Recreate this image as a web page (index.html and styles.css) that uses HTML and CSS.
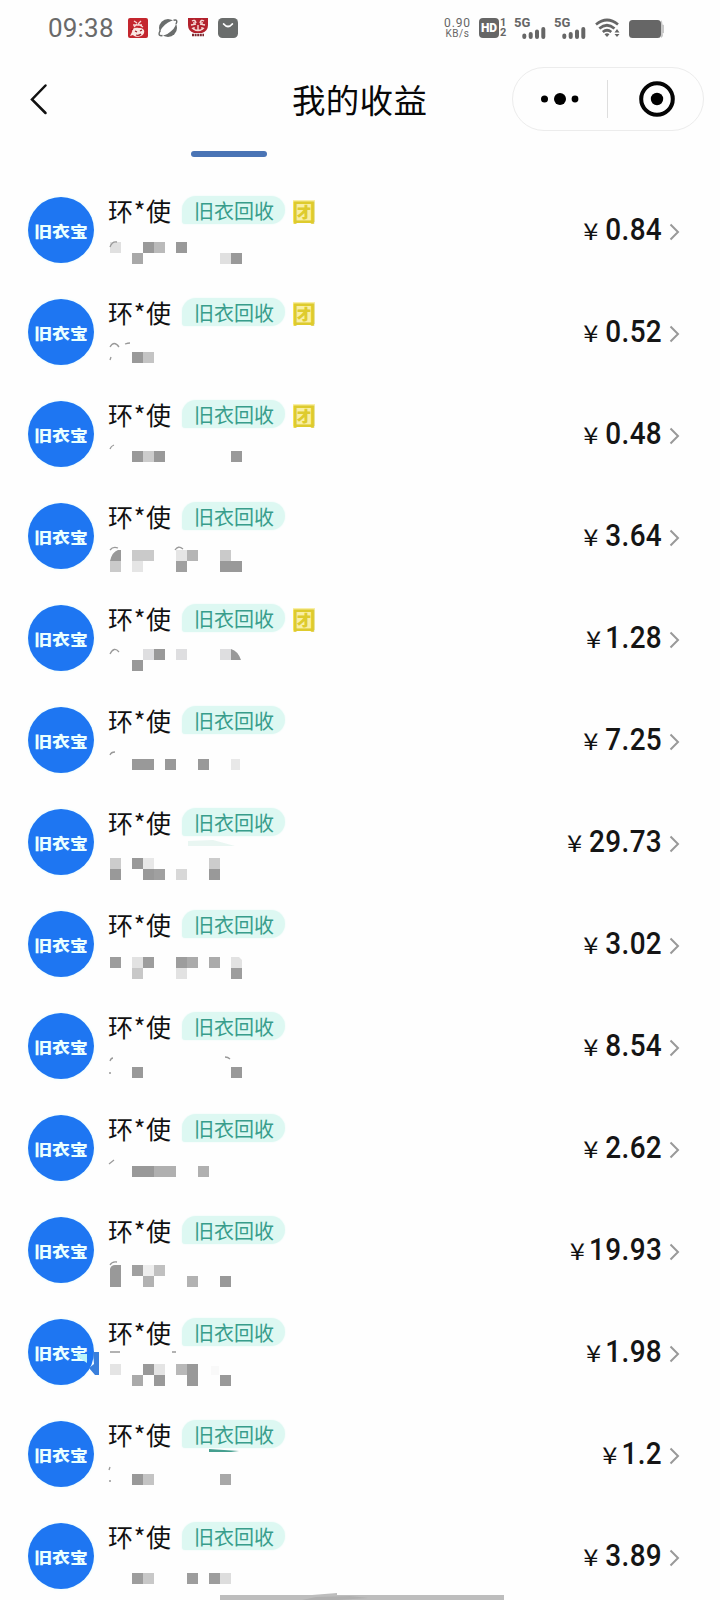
FILE: index.html
```html
<!DOCTYPE html>
<html lang="zh-CN">
<head>
<meta charset="utf-8">
<title>我的收益</title>
<link rel="stylesheet" href="styles.css">
</head>
<body>
<svg class="defs" width="0" height="0">
  <defs>
    <symbol id="chev" viewBox="0 0 12 20"><path d="M1.5 2.5 9 10 1.5 17.5" fill="none" stroke="#999" stroke-width="2"/></symbol>
    <symbol id="signal" viewBox="0 0 24 12"><path d="M2.3 10V8.500M8.700 10V7M15 10V4.500M21.300 10V2" fill="none" stroke="#666" stroke-width="4" stroke-linecap="round"/></symbol>
  </defs>
</svg>
<div class="screen">
  <header class="status">
    <div class="status-left">
      <span class="time">09:38</span>
      <svg class="app" viewBox="0 0 20 20"><rect width="20" height="20" rx="2" fill="#c4262e"/><path d="M6 3l3 2M13 3l-3 3M5 7h9M9 6l-3 3M10 6l5 3" stroke="#f7d9d5" stroke-width="1.300" fill="none"/><path d="M4 14c0-4 3-5 7-4 4 0 6 2 5 5-1 4-9 5-11 2l-3 1z" fill="#fae7e2"/><path d="M7 13l2 1M12 13l2-1M8 17q3 1 5-1M3 12l2-1" stroke="#a01a24" stroke-width="1.300" fill="none"/></svg>
      <svg class="app" viewBox="0 0 20 20"><circle cx="10" cy="10" r="9" fill="#6a6d6c"/><ellipse cx="10" cy="10" rx="10" ry="4.500" transform="rotate(-42 10 10)" fill="#fefefe"/><path d="M2.200 12.500Q-1 18.500 4.500 17.500M15.500 2.300Q20.500 1 18 6" fill="none" stroke="#6a6d6c" stroke-width="1.500"/></svg>
      <svg class="app" viewBox="0 0 20 20"><path d="M0 0h20v7q0 6-6 8H6Q0 13 0 7z" fill="#b3222d"/><path d="M4 3q3-2 4 2M16 3q-3-2-4 2M3 7l5-1M17 7l-5-1M4 10q6 5 12 0M6 9v3M10 7v6M14 9v3M6 4v3M14 4v3" stroke="#f5d8d5" stroke-width="1.400" fill="none"/><path d="M4 17h12" stroke="#7d2830" stroke-width="2.500" stroke-dasharray="2 .6"/></svg>
      <svg class="app" viewBox="0 0 20 20"><rect width="20" height="20" rx="4.500" fill="#6a6d6c"/><path d="M5.700 6q4.300 5 8.600 0" fill="none" stroke="#fff" stroke-width="1.900" stroke-linecap="round"/></svg>
    </div>
    <div class="status-right">
      <div class="speed"><span class="rate">0.90</span><span class="unit">KB/s</span></div>
      <div class="volte"><span class="hd">HD</span><span class="sims"><i>1</i><i>2</i></span></div>
      <div class="net"><b>5G</b><svg><use href="#signal"/></svg></div>
      <div class="net"><b>5G</b><svg><use href="#signal"/></svg></div>
      <svg class="wifi" viewBox="0 0 25 20"><path d="M1 6.500Q12 -2.500 23 6.500M4.300 10.500Q12 4 19.500 10.500M7.800 14Q12 10.500 16.300 14" fill="none" stroke="#666" stroke-width="2.700"/><path d="M9.500 16.300q2.500-2 5 0L12 19zM19.500 14.500 22 11l2.500 3.500zM19.500 16 22 19l2.500-3z" fill="#666"/></svg>
      <svg class="battery" viewBox="0 0 35 18"><rect width="32" height="18" rx="3.500" fill="#666"/><path d="M32 0v18q3-2 1.500-4.500L35 13V5l-1.500-.5Q33.500 1 32 0z" fill="#c8c8c8"/></svg>
    </div>
  </header>
  <nav class="navbar">
    <svg class="back" viewBox="0 0 18 32"><path d="M15.500 2.500 2 16.500 15.500 30" fill="none" stroke="#111" stroke-width="2.500" stroke-linecap="round"/></svg>
    <h1>我的收益</h1>
    <div class="capsule">
      <svg class="dots" viewBox="0 0 38 12"><circle cx="3.500" cy="6" r="3.500"/><circle cx="19" cy="6" r="6"/><circle cx="34" cy="6" r="3.400"/></svg>
      <span class="divider"></span>
      <svg class="target" viewBox="0 0 36 36"><circle cx="18" cy="18" r="15.800" fill="none" stroke="#050505" stroke-width="4"/><circle cx="18" cy="18" r="6.200"/></svg>
    </div>
  </nav>
  <div class="tabs"><span class="indicator"></span></div>
  <main class="list">
    <section class="row"><div class="avatar"><span>旧衣宝</span></div><div class="info"><div class="line"><span class="name">环<i>*</i>使</span><span class="tag">旧衣回收</span><span class="group">团</span></div>
      <svg class="mosaic"><path fill="#e0e0e0" d="M1 7h11v11H1zM111 18h11v11h-11z"/><path fill="#999" d="M34 7h11v11H34zM67 7h11v11H67zM122 18h11v11h-11z"/><path fill="#bababa" d="M45 7h11v11H45z"/><path fill="#a8a8a8" d="M23 18h11v11H23z"/><path class="arc" d="M1 12Q3 6 8 7"/></svg></div><div class="price"><span>¥</span><b>0.84</b></div><svg class="chev"><use href="#chev"/></svg></section>
    <section class="row"><div class="avatar"><span>旧衣宝</span></div><div class="info"><div class="line"><span class="name">环<i>*</i>使</span><span class="tag">旧衣回收</span><span class="group">团</span></div>
      <svg class="mosaic"><path fill="#999" d="M23 15h11v11H23z"/><path fill="#c4c4c4" d="M34 15h11v11H34z"/><path class="arc" d="M1 10Q5 3 10 10M16 7Q19 6 21 6M1 23l1-3"/></svg></div><div class="price"><span>¥</span><b>0.52</b></div><svg class="chev"><use href="#chev"/></svg></section>
    <section class="row"><div class="avatar"><span>旧衣宝</span></div><div class="info"><div class="line"><span class="name">环<i>*</i>使</span><span class="tag">旧衣回收</span><span class="group">团</span></div>
      <svg class="mosaic"><path fill="#999" d="M23 12h11v11H23zM45 12h11v11H45zM122 12h11v11h-11z"/><path fill="#ccc" d="M34 12h11v11H34z"/><path class="arc" d="M1 10Q2 7 5 6"/></svg></div><div class="price"><span>¥</span><b>0.48</b></div><svg class="chev"><use href="#chev"/></svg></section>
    <section class="row"><div class="avatar"><span>旧衣宝</span></div><div class="info"><div class="line"><span class="name">环<i>*</i>使</span><span class="tag">旧衣回收</span></div>
      <svg class="mosaic"><path fill="#999" d="M1 20Q3 11 9 9h3v11zM111 20h22v11h-22z"/><path fill="#cacaca" d="M1 20h11v11H1zM23 9h22v11H23zM111 9h11v11h-11z"/><path fill="#e5e5e5" d="M23 20h11v11H23zM67 9h11v11H67z"/><path fill="#b5b5b5" d="M78 9h11v11H78z"/><path fill="#a0a0a0" d="M67 20h11v11H67z"/><path class="arc" d="M1 9Q4 5 9 7M66 9Q69 4 74 8"/></svg></div><div class="price"><span>¥</span><b>3.64</b></div><svg class="chev"><use href="#chev"/></svg></section>
    <section class="row"><div class="avatar"><span>旧衣宝</span></div><div class="info"><div class="line"><span class="name">环<i>*</i>使</span><span class="tag">旧衣回收</span><span class="group">团</span></div>
      <svg class="mosaic"><path fill="#dedee0" d="M34 6h11v11H34zM67 6h11v11H67zM111 6h11v11h-11z"/><path fill="#999" d="M45 6h11v11H45zM23 17h11v11H23zM122 17V6q7 2 10 11z"/><path class="arc" d="M1 11Q5 3 10 9"/></svg></div><div class="price"><span>¥</span><b><i class="one">1</i>.28</b></div><svg class="chev"><use href="#chev"/></svg></section>
    <section class="row"><div class="avatar"><span>旧衣宝</span></div><div class="info"><div class="line"><span class="name">环<i>*</i>使</span><span class="tag">旧衣回收</span></div>
      <svg class="mosaic"><path fill="#999" d="M23 14h22v11H23zM56 14h11v11H56zM89 14h11v11H89z"/><path fill="#e8e8e8" d="M122 14h9v11h-9z"/><path class="arc" d="M1 10Q2 7 6 7"/></svg></div><div class="price"><span>¥</span><b>7.25</b></div><svg class="chev"><use href="#chev"/></svg></section>
    <section class="row"><div class="avatar"><span>旧衣宝</span></div><div class="info"><div class="line"><span class="name">环<i>*</i>使</span><span class="tag">旧衣回收</span></div>
      <svg class="mosaic"><path fill="#e9f6f2" d="M79-6l25-1 22 6H79z"/><path fill="#ccc" d="M1 11h11v11H1zM100 11h11v11h-11z"/><path fill="#999" d="M23 11h11v11H23zM1 22h11v11H1zM34 22h11v11H34zM100 22h11v11h-11z"/><path fill="#a0a0a0" d="M45 22h11v11H45z"/><path fill="#e8e8e8" d="M34 11h11v11H34z"/><path fill="#d8d8d8" d="M67 22h11v11H67z"/></svg></div><div class="price"><span>¥</span><b>29.73</b></div><svg class="chev"><use href="#chev"/></svg></section>
    <section class="row"><div class="avatar"><span>旧衣宝</span></div><div class="info"><div class="line"><span class="name">环<i>*</i>使</span><span class="tag">旧衣回收</span></div>
      <svg class="mosaic"><path fill="#9d9d9d" d="M1 8h11v11H1zM34 8h11v11H34zM67 8h11v11H67zM122 19h11v11h-11z"/><path fill="#ababab" d="M78 8h11v11H78zM100 8h11v11h-11z"/><path fill="#e2e2e2" d="M23 8h11v11H23zM67 19h11v11H67zM122 8h8l3 3v8h-11z"/><path fill="#c8c8c8" d="M23 19h11v11H23z"/></svg></div><div class="price"><span>¥</span><b>3.02</b></div><svg class="chev"><use href="#chev"/></svg></section>
    <section class="row"><div class="avatar"><span>旧衣宝</span></div><div class="info"><div class="line"><span class="name">环<i>*</i>使</span><span class="tag">旧衣回收</span></div>
      <svg class="mosaic"><path fill="#999" d="M23 16h11v11H23zM122 16h11v11h-11z"/><path class="arc" d="M1 10Q2 7 4 7M0 22h2M116 6q3 0 5 2"/></svg></div><div class="price"><span>¥</span><b>8.54</b></div><svg class="chev"><use href="#chev"/></svg></section>
    <section class="row"><div class="avatar"><span>旧衣宝</span></div><div class="info"><div class="line"><span class="name">环<i>*</i>使</span><span class="tag">旧衣回收</span></div>
      <svg class="mosaic"><path fill="#999" d="M23 13h22v11H23z"/><path fill="#b0b0b0" d="M45 13h22v11H45zM89 13h11v11H89z"/><path class="arc" d="M0 11l5-4"/></svg></div><div class="price"><span>¥</span><b>2.62</b></div><svg class="chev"><use href="#chev"/></svg></section>
    <section class="row"><div class="avatar"><span>旧衣宝</span></div><div class="info"><div class="line"><span class="name">环<i>*</i>使</span><span class="tag">旧衣回收</span></div>
      <svg class="mosaic"><path fill="#999" d="M1 32V14q1-4 5-4h6v22zM111 21h11v11h-11z"/><path fill="#a0a0a0" d="M23 10h11v11H23z"/><path fill="#eee" d="M34 10h11v11H34z"/><path fill="#c0c0c0" d="M45 10h11v11H45z"/><path fill="#b2b2b2" d="M34 21h11v11H34zM78 21h11v11H78z"/><path class="arc" d="M1 10Q3 6 8 7"/></svg></div><div class="price"><span>¥</span><b><i class="one">1</i>9.93</b></div><svg class="chev"><use href="#chev"/></svg></section>
    <section class="row"><div class="avatar"><span>旧衣宝</span><svg class="smear" viewBox="0 0 24 26"><path d="M0 4h12v9L0 5z" fill="#b9f3fa"/><path d="M18 2h6v23h-4l-6-7 5-4z" fill="#397fdc"/></svg></div><div class="info"><div class="line"><span class="name">环<i>*</i>使</span><span class="tag">旧衣回收</span></div>
      <svg class="mosaic"><path fill="#e4e4e4" d="M1 7h11v11H1zM45 7h11v11H45z"/><path fill="#999" d="M34 7h11v11H34zM78 7h11v22H78zM45 18h11v11H45zM111 18h11v11h-11z"/><path fill="#b8b8b8" d="M67 7h11v11H67z"/><path fill="#aaa" d="M23 18h11v11H23z"/><path fill="#f9f9f9" d="M102 9h8v9h-8z"/><path class="arc" d="M1-5h10M63-5h4"/></svg></div><div class="price"><span>¥</span><b><i class="one">1</i>.98</b></div><svg class="chev"><use href="#chev"/></svg></section>
    <section class="row"><div class="avatar"><span>旧衣宝</span></div><div class="info"><div class="line"><span class="name">环<i>*</i>使</span><span class="tag">旧衣回收</span></div>
      <svg class="mosaic"><path fill="#459f8f" d="M100-10l30 2-8 1h-22z"/><path fill="#999" d="M23 15h11v11H23z"/><path fill="#c4c4c4" d="M34 15h11v11H34z"/><path fill="#a8a8a8" d="M111 15h11v11h-11z"/><path class="arc" d="M0 11l1-3M0 22h2"/></svg></div><div class="price"><span>¥</span><b><i class="one">1</i>.2</b></div><svg class="chev"><use href="#chev"/></svg></section>
    <section class="row"><div class="avatar"><span>旧衣宝</span></div><div class="info"><div class="line"><span class="name">环<i>*</i>使</span><span class="tag">旧衣回收</span></div>
      <svg class="mosaic"><path fill="#9d9d9d" d="M23 12h11v11H23zM78 12h11v11H78zM100 12h11v11h-11z"/><path fill="#c8c8c8" d="M34 12h11v11H34z"/><path fill="#ddd" d="M111 12h11v11h-11z"/></svg></div><div class="price"><span>¥</span><b>3.89</b></div><svg class="chev"><use href="#chev"/></svg></section>
  </main>
  <svg class="homebar" viewBox="0 0 284 8"><path d="M0 3h92l25-2v2h167v5H0z" fill="#bdbdbd"/><path d="M82 8l14-3 34-1 18 2-30 2z" fill="#b0b0b0"/></svg>
</div>
</body>
</html>
```
FILE: styles.css
```css
* { box-sizing: border-box; }
body { margin: 0; background: #fefefe; font-family: Roboto, "Noto Sans CJK SC", sans-serif; color: #111; }
svg { display: block; overflow: visible; }
i { font-style: normal; }
.defs { position: absolute; }
.screen { position: relative; width: 720px; height: 1600px; overflow: hidden; }

.status { height: 56px; padding: 0 56px 0 48px; display: flex; justify-content: space-between; align-items: center; color: #666; }
.status-left { display: flex; align-items: center; gap: 10px; }
.time { width: 70px; font-size: 26px; letter-spacing: 0.2px; line-height: 30px; color: #6a6a6a; }
.app { width: 20px; height: 20px; }
.status-right { display: flex; align-items: center; }
.speed { width: 27px; display: flex; flex-direction: column; align-items: center; margin-right: 8px; }
.rate { font-size: 12px; line-height: 11px; letter-spacing: 0.9px; }
.unit { font-size: 10px; line-height: 10px; letter-spacing: 0.5px; }
.volte { display: flex; gap: 1px; width: 36px; }
.hd { width: 20px; height: 20px; border-radius: 4px; background: #666; color: #fff; font-size: 12px; line-height: 20px; font-weight: 900; text-align: center; }
.sims { display: flex; flex-direction: column; font-size: 11px; line-height: 10px; font-weight: 700; }
.net { width: 40px; height: 20px; }
.net b { display: block; font-size: 13px; line-height: 10px; height: 9px; }
.net svg { width: 24px; height: 12px; margin-left: 8px; }
.net b, .net svg { position: relative; left: -1px; }
.wifi { width: 25px; height: 20px; margin-right: 9px; }
.battery { width: 35px; height: 18px; margin-top: 2px; }

.navbar { height: 86px; padding: 0 16px 0 30px; display: grid; grid-template-columns: 262px 1fr 192px; align-items: center; }
.back { width: 18px; height: 32px; }
.navbar h1 { margin: -1px 0 0; font-size: 33.5px; font-weight: 400; line-height: 44px; letter-spacing: .3px; white-space: nowrap; color: #080808; font-family: "Noto Sans CJK SC", sans-serif; }
.capsule { height: 64px; border: 1px solid #ececec; border-radius: 32px; display: flex; align-items: center; padding-left: 28px; }
.dots { width: 38px; height: 12px; }
.divider { width: 1px; height: 38px; background: #dedede; margin: 0 31px 0 28px; }
.target { width: 36px; height: 36px; }

.tabs { height: 37px; padding: 9px 0 0 191px; }
.indicator { display: block; width: 76px; height: 6px; border-radius: 3px; background: #4a74b5; }

.row { height: 102px; padding: 0 39px 0 28px; display: flex; align-items: center; }
.avatar { position: relative; flex: none; width: 66px; height: 66px; border-radius: 50%; background: #1e76f2; color: #eaffff; display: flex; align-items: center; justify-content: center; box-shadow: 0 0 3px #dffcff; }
.avatar span { font: 900 17.8px/20px "Noto Sans CJK SC", sans-serif; transform: scaleY(.84); margin-top: -1px; }
.smear { position: absolute; left: 47px; top: 31px; width: 24px; height: 26px; }
.info { flex: 1; height: 102px; padding: 17px 0 0 15px; }
.line { height: 28px; display: flex; align-items: center; margin-bottom: 11px; }
.name { width: 74px; margin: 0 0 0 -1px; display: flex; font: 400 25px/28px "Noto Sans CJK SC", sans-serif; color: #111; }
.name i { width: 13px; text-align: center; }
.tag { width: 103px; height: 28px; padding-left: 12px; border-radius: 14px 14px 14px 3px; background: #ddf8f2; color: #389d8b; font: 400 20px/29px "Noto Sans CJK SC", sans-serif; box-shadow: 0 0 2px #e6faf6; }
.group { width: 22px; height: 22px; margin: 2px 0 0 8px; background: #f9efa5; color: #decb2d; font: 700 24px/21px "Noto Sans CJK SC", sans-serif; text-indent: -1px; }
.mosaic { width: 140px; height: 34px; }
.arc { fill: none; stroke: #999; stroke-width: 1.3; }
.price { display: flex; align-items: center; gap: 8px; transform: scaleX(.9); transform-origin: right; margin-right: 7px; }
.price span { font: 400 23px/30px "Noto Sans CJK SC", sans-serif; width: 16px; margin-top: 0; transform: scaleX(1.32); transform-origin: center; text-align: center; }
.price b { font: 500 31px/36px Roboto, sans-serif; letter-spacing: .4px; color: #151515; }
.price .one { margin-left: -3px; }
.chev { width: 12px; height: 20px; margin-top: 3px; }

.homebar { position: absolute; left: 220px; top: 1592px; width: 284px; height: 8px; }
```
